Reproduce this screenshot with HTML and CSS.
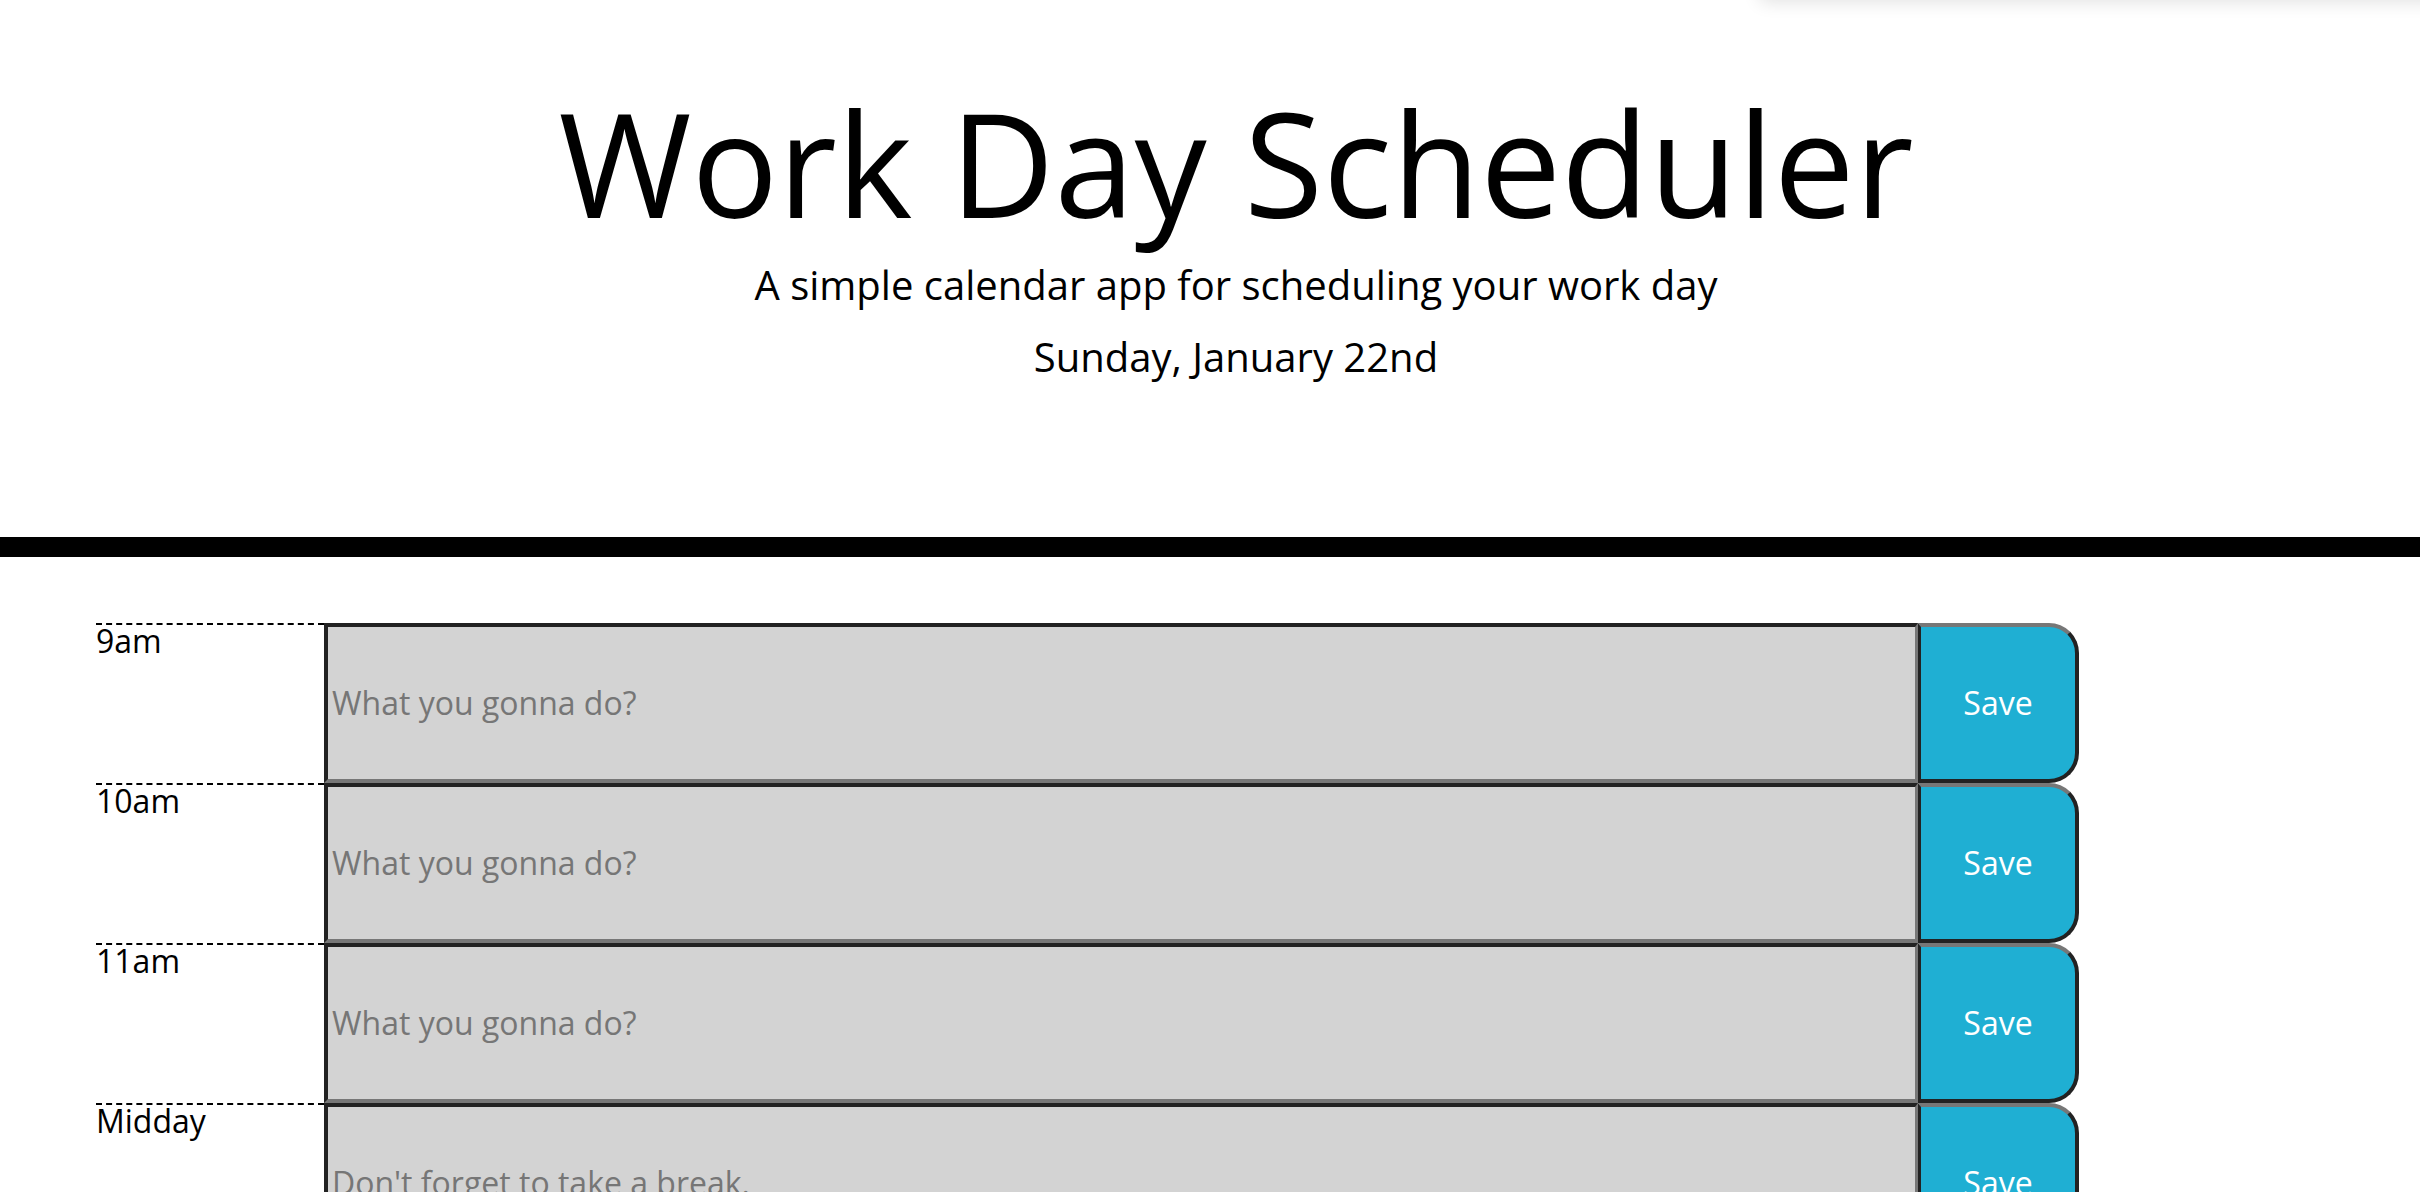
FILE: index.html
```html
<!DOCTYPE html>
<html lang="en">
<head>
<meta charset="utf-8">
<title>Work Day Scheduler</title>
<link rel="stylesheet" href="styles.css">
</head>
<body>
<div class="popup-shadow"></div>
<header class="jumbotron">
  <h1 class="title">Work Day Scheduler</h1>
  <p class="lead">A simple calendar app for scheduling your work day</p>
  <p class="lead" id="currentDay">Sunday, January 22nd</p>
</header>
<main class="schedule">
  <div class="time-block">
    <div class="hour">9am</div>
    <textarea class="description" placeholder="What you gonna do?"></textarea>
    <button class="saveBtn">Save</button>
  </div>
  <div class="time-block">
    <div class="hour">10am</div>
    <textarea class="description" placeholder="What you gonna do?"></textarea>
    <button class="saveBtn">Save</button>
  </div>
  <div class="time-block">
    <div class="hour">11am</div>
    <textarea class="description" placeholder="What you gonna do?"></textarea>
    <button class="saveBtn">Save</button>
  </div>
  <div class="time-block">
    <div class="hour">Midday</div>
    <textarea class="description" placeholder="Don't forget to take a break."></textarea>
    <button class="saveBtn">Save</button>
  </div>
</main>
</body>
</html>
```
FILE: styles.css
```css
* {
  box-sizing: border-box;
}

html,
body {
  margin: 0;
  padding: 0;
}

body {
  font-family: "Open Sans", "DejaVu Sans", sans-serif;
  line-height: 1;
  color: #000;
  background: #fff;
  overflow: hidden;
}

.popup-shadow {
  position: absolute;
  top: -40px;
  left: 1760px;
  right: -20px;
  height: 40px;
  background: #fff;
  box-shadow: 0 2px 18px rgba(0, 0, 0, 0.12);
}

.jumbotron {
  text-align: center;
  padding: 76px 0 128px 52px;
  border-bottom: 20px solid #000;
  margin-bottom: 66px;
}

.title {
  margin: 0 0 16px;
  font-size: 144px;
  font-weight: 400;
  line-height: 1.2;
}

.lead {
  margin: 0 0 32px;
  font-size: 40px;
  font-weight: 400;
  line-height: 1;
}

.schedule {
  padding-left: 96px;
}

.time-block {
  display: flex;
  height: 160px;
}

.hour {
  flex: 0 0 228px;
  border-top: 2px dashed #000;
  font-size: 32px;
  line-height: 1;
}

.description {
  flex: 0 0 1594px;
  height: 160px;
  margin: 0;
  padding: 60px 4px 0;
  border-style: solid;
  border-width: 4px 3px 4px 4px;
  border-color: #222 #777 #777 #222;
  background: #d3d3d3;
  font-family: "Open Sans", "DejaVu Sans", sans-serif;
  font-size: 32px;
  line-height: 1;
  color: #000;
  resize: none;
  overflow: hidden;
  outline: none;
}

.description::placeholder {
  color: #767676;
  opacity: 1;
}

.saveBtn {
  flex: 0 0 161px;
  height: 160px;
  margin: 0;
  padding: 0;
  border-style: solid;
  border-width: 4px 4px 4px 3px;
  border-color: #777 #222 #222 #222;
  border-radius: 0 30px 30px 0;
  background: #1fafd3;
  color: #fff;
  font-family: "Open Sans", "DejaVu Sans", sans-serif;
  font-size: 32px;
  line-height: 1;
}
```
